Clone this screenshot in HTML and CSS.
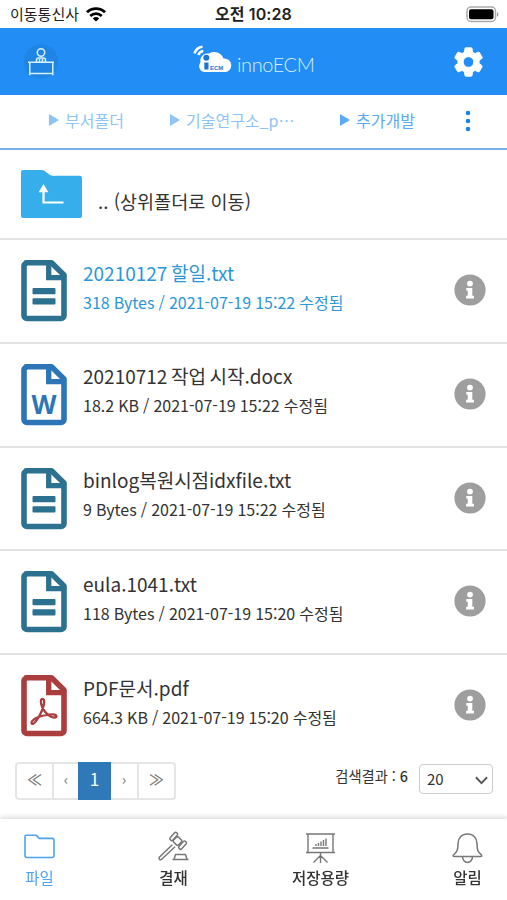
FILE: index.html
```html
<!DOCTYPE html>
<html lang="ko">
<head>
<meta charset="utf-8">
<title>innoECM</title>
<link rel="stylesheet" href="styles.css">
</head>
<body>
<svg width="0" height="0" class="defs">
  <symbol id="sheet" viewBox="0 0 46 62">
    <path d="M5 2.800h25.500L43 15v40.500a3 3 0 0 1-3 3H6a3 3 0 0 1-3-3V6a3 3 0 0 1 3-3z" fill="#fff" stroke="currentColor" stroke-width="5.600" stroke-linejoin="round"/>
    <path d="M27.700 3v14.700h15" fill="none" stroke="currentColor" stroke-width="5.300"/>
  </symbol>
  <symbol id="lines" viewBox="0 0 46 62">
    <path d="M12.500 28h21q1 0 1 1v4.300q0 1-1 1h-21q-1 0-1-1V29q0-1 1-1zM12.500 38.200h21q1 0 1 1v4.300q0 1-1 1h-21q-1 0-1-1v-4.300q0-1 1-1z" fill="currentColor"/>
  </symbol>
  <symbol id="info" viewBox="0 0 32 32">
    <circle cx="16" cy="16" r="15.600" fill="#9e9e9e"/>
    <circle cx="16" cy="9.600" r="2.900" fill="#fff"/>
    <path d="M12.300 14h6v7.700h1.700v2.800h-7.900v-2.800h1.700v-4.900h-1.500z" fill="#fff"/>
  </symbol>
</svg>
<div class="status">
  <span class="carrier">이동통신사</span>
  <svg class="wifi" viewBox="0 0 20 15"><g fill="none" stroke="#000" stroke-width="2.800"><path d="M1 5.300a13 13 0 0 1 18 0"/><path d="M4.300 8.900a8.200 8.200 0 0 1 11.400 0"/></g><path d="M6.800 11.400a4.600 4.600 0 0 1 6.400 0L10 14.600z"/></svg>
  <span class="clock">오전 10:28</span>
  <svg class="battery" viewBox="0 0 33 17"><rect x="1" y="1" width="28.500" height="14.500" rx="4" fill="#fff" stroke="#aaa" stroke-width="1.500"/><rect x="3" y="3.200" width="24.500" height="10" rx="2"/><path d="M31 6v5q3-2.500 0-5z" fill="#999"/></svg>
</div>
<header class="header">
  <svg class="desk" viewBox="0 0 36 36"><circle cx="18" cy="17.500" r="17" fill="#1f84e4"/><g fill="none" stroke="#d8f1ff" stroke-width="1.500"><circle cx="18" cy="8.500" r="3.700"/><path d="M13.500 18v-2q0-2 2-2h5q2 0 2 2v2M16.500 15v3M19.500 15v3M5 18.300h26M6.800 18.500V31.300M29.800 18.500V31.300M6.800 29.500h23"/></g></svg>
  <div class="brand">
    <svg class="cloud" viewBox="0 0 38 30"><path d="M12 27a5.800 5.800 0 0 1-4.500-9.500A7.400 7.400 0 0 1 16 8.500a9.800 9.800 0 0 1 14.500 5 6.800 6.800 0 1 1 .5 13.500z" fill="#fff"/><g fill="none" stroke="#fff" stroke-width="2.600"><path d="M1.500 8.500A9.500 9.500 0 0 1 9.500 1.800"/><path d="M5.300 10a6 6 0 0 1 5-4" /></g><circle cx="13.300" cy="12.700" r="3" fill="#1a76cf"/><path d="M11.300 17.500h4.200v7h-4.200z" fill="#1a76cf"/><text x="17" y="24.500" class="mini">ECM</text></svg>
    <span class="name">innoECM</span>
  </div>
  <svg class="gear" viewBox="2.200 2 19.600 20"><path fill="#fff" stroke="#fff" stroke-width=".6" stroke-linejoin="round" d="M19.140 12.940c.04-.3.060-.61.060-.94s-.02-.64-.07-.94l2.030-1.580c.18-.14.230-.41.120-.61l-1.920-3.320c-.12-.22-.37-.29-.59-.22l-2.390.960c-.5-.38-1.030-.7-1.620-.94l-.36-2.540c-.04-.24-.24-.41-.48-.41h-3.840c-.24 0-.43.170-.47.410l-.36 2.540c-.59.240-1.130.570-1.620.940l-2.390-.96c-.22-.08-.47 0-.59.220L2.740 8.870c-.12.210-.08.470.120.610l2.030 1.580c-.05.300-.09.630-.09.940s.02.640.070.940l-2.030 1.580c-.18.140-.23.410-.12.610l1.920 3.320c.12.220.370.290.590.220l2.390-.96c.5.380 1.030.700 1.620.940l.36 2.540c.05.240.240.410.480.410h3.840c.24 0 .44-.17.470-.41l.36-2.540c.59-.24 1.130-.56 1.620-.94l2.390.960c.22.080.470 0 .59-.22l1.920-3.320c.12-.22.070-.47-.12-.61zM12 15.600A3.600 3.600 0 1 1 12 8.400a3.600 3.600 0 0 1 0 7.200z"/></svg>
</header>
<nav class="crumbs">
  <span class="crumb first"><i class="tri"></i><span>부서폴더</span></span>
  <span class="crumb second"><i class="tri"></i><span>기술연구소_p<span class="dots">⋯</span></span></span>
  <span class="crumb third"><i class="tri"></i><span>추가개발</span></span>
  <svg class="more" viewBox="0 0 6 22"><g fill="#1d83e2"><circle cx="3" cy="3" r="2.300"/><circle cx="3" cy="11" r="2.300"/><circle cx="3" cy="19" r="2.300"/></g></svg>
</nav>
<main>
  <div class="up">
    <svg class="folder" viewBox="0 0 61 49"><path d="M2 0h18.500q2 0 3.500 1.200l5 3.800q1 .8 2.500.8H59q2 0 2 2V46q0 2-2 2H2q-2 0-2-2V2q0-2 2-2z" fill="#35aeeb"/><path d="M22.500 18v14.500h20" fill="none" stroke="#fff" stroke-width="2.200"/><path d="M22.500 14l4.800 8.300h-9.600z" fill="#fff"/></svg>
    <span>.. (상위폴더로 이동)</span>
  </div>
  <div class="row active">
    <svg class="file txt"><use href="#sheet"/><use href="#lines"/></svg>
    <div class="meta"><div class="title">20210127 할일.txt</div><div class="sub">318 Bytes / 2021-07-19 15:22 수정됨</div></div>
    <svg class="info"><use href="#info"/></svg>
  </div>
  <div class="row">
    <svg class="file doc" viewBox="0 0 46 62"><use href="#sheet"/><text x="23" y="49.500" class="w" textLength="25" lengthAdjust="spacingAndGlyphs">W</text></svg>
    <div class="meta"><div class="title">20210712 작업 시작.docx</div><div class="sub">18.2 KB / 2021-07-19 15:22 수정됨</div></div>
    <svg class="info"><use href="#info"/></svg>
  </div>
  <div class="row">
    <svg class="file txt"><use href="#sheet"/><use href="#lines"/></svg>
    <div class="meta"><div class="title">binlog복원시점idxfile.txt</div><div class="sub">9 Bytes / 2021-07-19 15:22 수정됨</div></div>
    <svg class="info"><use href="#info"/></svg>
  </div>
  <div class="row">
    <svg class="file txt"><use href="#sheet"/><use href="#lines"/></svg>
    <div class="meta"><div class="title">eula.1041.txt</div><div class="sub">118 Bytes / 2021-07-19 15:20 수정됨</div></div>
    <svg class="info"><use href="#info"/></svg>
  </div>
  <div class="row last">
    <svg class="file pdf" viewBox="0 0 46 62"><use href="#sheet"/><path d="M21.500 24c2.700 0 2 5.500-.5 11.500S13.500 49.500 11.300 48.800s.2-4.800 6.200-6.800 15.500-3.500 17.500-1.700-1.500 3.200-5.500 1.200-8.500-8-9.300-12.500.1-5 1.300-5z" fill="none" stroke="currentColor" stroke-width="2.300"/></svg>
    <div class="meta"><div class="title">PDF문서.pdf</div><div class="sub">664.3 KB / 2021-07-19 15:20 수정됨</div></div>
    <svg class="info"><use href="#info"/></svg>
  </div>
  <div class="tools">
    <div class="pager"><span class="wide">≪</span><span class="prev">‹</span><span class="current">1</span><span class="next">›</span><span class="wide">≫</span></div>
    <div class="result">검색결과 : <b>6</b></div>
    <div class="select"><span>20</span><svg viewBox="0 0 14 9"><path d="M1 1l6 6.300L13 1" fill="none" stroke="#555" stroke-width="2"/></svg></div>
  </div>
</main>
<footer class="tabs">
  <div class="tab on"><svg viewBox="0 0 31 30"><path d="M2 3.300h9q1.500 0 2.500 1.100l1.700 2H28q2 0 2 2V23.500q0 2-2 2H3q-2 0-2-2V4.500q0-1.200 1-1.200z" fill="none" stroke="currentColor" stroke-width="1.600"/></svg><span>파일</span></div>
  <div class="tab"><svg viewBox="0 0 31 30"><g fill="none" stroke="currentColor" stroke-width="1.500" stroke-linejoin="round"><path d="M14.300 12.800L1.300 25.300q-.8 1.500.4 2.200 1 .6 2-.3L17 14.800"/><rect x="16" y="5.500" width="7" height="7" rx="1.500" transform="rotate(45 19.500 9)"/><rect x="11" y="2.700" width="9.500" height="3.600" rx="1.500" transform="rotate(-48 15.700 4.500)"/><rect x="19.800" y="11.400" width="9.500" height="3.600" rx="1.500" transform="rotate(-48 24.500 13.200)"/><path d="M17.500 22.500h10l1.500 5H16zM14.500 27.500h16"/></g></svg><span>결재</span></div>
  <div class="tab"><svg viewBox="0 0 31 30"><g fill="none" stroke="currentColor" stroke-width="1.400"><path d="M1 2h29M1 20.500h29M3 2v18M28 2v18M15.500 21v10M15.500 23.500L8.500 30.500M15.500 23.500l7 7M7.500 16h16M11 14v-2M13.500 14v-3M16 14V9.500M18.500 14V8M21 14V6.500"/></g></svg><span>저장용량</span></div>
  <div class="tab"><svg viewBox="0 0 31 30"><g fill="none" stroke="currentColor" stroke-width="1.500" stroke-linejoin="round"><path d="M15.500 2c-6 0-9.500 4-9.500 9.500 0 6-.5 8-4.500 11.500q-.8 1.500.5 1.500h27q1.300 0 .5-1.500c-4-3.500-4.500-5.500-4.500-11.500C25 6 21.500 2 15.500 2zM10.500 24.500a5 6 0 0 0 10 0"/></g></svg><span>알림</span></div>
</footer>
</body>
</html>
```
FILE: styles.css
```css
* { box-sizing: border-box; }
body { margin: 0; width: 507px; height: 900px; overflow: hidden; background: #fff; color: #333; font-family: "Noto Sans CJK KR", sans-serif; }
svg { display: block; flex: none; overflow: visible; }
.defs { position: absolute; }
.status { height: 28px; display: flex; align-items: center; padding: 0 8px 0 10px; color: #222; line-height: 28px; }
.carrier { font-size: 15px; width: 76px; white-space: nowrap; }
.wifi { width: 20px; height: 15px; }
.clock { font-family: Inter, "Noto Sans CJK KR", sans-serif; font-size: 16px; font-weight: 600; letter-spacing: .1px; margin-left: 109px; white-space: nowrap; }
.battery { width: 33px; height: 17px; margin-left: auto; }
.header { height: 67px; background: #218df5; display: flex; align-items: center; padding: 0 24px 0 23px; }
.desk { width: 36px; height: 36px; }
.brand { display: flex; align-items: center; margin-left: 134px; }
.cloud { width: 38px; height: 30px; margin-top: -3px; }
.mini { font: 700 6px "Liberation Sans", sans-serif; fill: #1a76cf; }
.name { color: #d8f1ff; font-family: Lato, sans-serif; font-weight: 300; font-size: 20px; letter-spacing: -.4px; line-height: 24px; margin: 4px 0 0 6px; }
.gear { width: 29px; height: 30px; margin-left: auto; }
.crumbs { height: 55px; display: grid; grid-template-columns: 121px 170px 128px 6px; align-items: center; padding: 0 0 3px 49px; border-bottom: 2px solid #78b0ec; color: #8fc4f7; font-size: 16px; }
.crumb { display: flex; align-items: center; gap: 6px; white-space: nowrap; }
.third { color: #5aabf3; }
.tri { border-left: 10px solid currentColor; border-top: 6px solid transparent; border-bottom: 6px solid transparent; }
.crumbs .more { width: 6px; height: 22px; margin-top: 2px; margin-left: -3px; }
.up { height: 90px; border-bottom: 2px solid #e4e4e4; display: flex; padding: 20px 21px; }
.folder { width: 61px; height: 49px; }
.up span { font-size: 18.500px; letter-spacing: .05px; line-height: 28px; margin: 17px 0 0 16px; }
.row { height: 103.800px; border-bottom: 2px solid #e2e2e2; display: flex; align-items: flex-start; padding: 20px 21px 0; }
.row.last { border: 0; height: 107px; }
.file { width: 46px; height: 62px; }
.txt { color: #2d7190; }
.doc { color: #2c76b7; }
.pdf { color: #aa3d3d; }
.w { font: 700 26px "Open Sans", sans-serif; fill: #2c76b7; text-anchor: middle; }
.meta { margin: -1.500px 0 0 16px; flex: 1; white-space: nowrap; }
.title { font-size: 19px; line-height: 28px; word-spacing: -1.700px; }
.sub { font-size: 16px; line-height: 24px; margin-top: 3px; word-spacing: -.4px; }
.active .meta { color: #2b97d8; }
.info { width: 32px; height: 32px; margin-top: 14px; }
.tools { display: flex; padding: 0 14px 0 15px; align-items: flex-start; }
.pager { display: flex; height: 38px; width: 161px; border: 2px solid #e5e5e5; border-radius: 4px; color: #777; font-size: 15px; line-height: 30px; text-align: center; }
.wide { width: 35px; font-weight: 500; }
.prev { width: 26px; border-left: 2px solid #e5e5e5; }
.current { width: 33px; margin: -2px 0; line-height: 34px; background: #2f79b9; color: #fff; font-size: 17px; }
.next { width: 28px; border-right: 2px solid #e5e5e5; }
.result { font-size: 14.300px; line-height: 20px; margin: 4px 11px 0 auto; }
.result b { font-weight: 500; }
.select { display: flex; align-items: center; justify-content: space-between; width: 74px; height: 30px; margin-top: 2px; border: 1.500px solid #ccc; border-radius: 4px; padding: 0 4px 0 7px; font-size: 15px; line-height: 26px; }
.select svg { width: 13px; height: 9px; margin-top: 3px; }
.tabs { position: fixed; left: 0; bottom: 0; width: 507px; height: 81px; background: #fff; box-shadow: 0 -2px 5px rgba(0,0,0,.14); display: flex; justify-content: space-between; padding: 13px 24px 0; }
.tab { display: flex; flex-direction: column; align-items: center; font-size: 15.500px; line-height: 22px; font-weight: 500; }
.tab svg { width: 31px; height: 30px; color: #777; margin-bottom: 4px; }
.tab.on { font-weight: 400; }
.tab.on, .tab.on svg { color: #4ba3f2; }
```
